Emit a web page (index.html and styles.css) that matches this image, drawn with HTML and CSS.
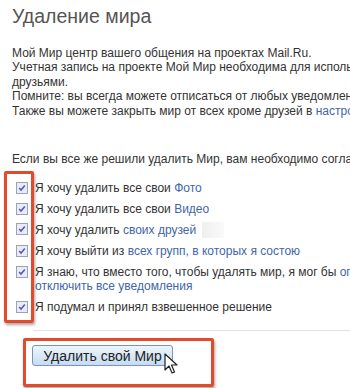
FILE: index.html
```html
<!DOCTYPE html>
<html>
<head>
	<meta charset="utf-8">
	<meta name="viewport" content="width=device-width, initial-scale=1">
	<title>Удаление мира</title>
	<link rel="stylesheet" href="styles.css">
</head>
<body>

<div class="page">
	<h1 class="title">Удаление мира</h1>

	<p class="intro">
		Мой Мир центр вашего общения на проектах Mail.Ru.<br>
		Учетная запись на проекте Мой Мир необходима для использования<br>
		друзьями.<br>
		Помните: вы всегда можете отписаться от любых уведомлений<br>
		Также вы можете закрыть мир от всех кроме друзей в <a href="#">настройках</a>
	</p>

	<p class="lead">Если вы все же решили удалить Мир, вам необходимо согласиться</p>

	<div class="checks">
		<label class="row"><svg class="box" width="12" height="12" viewBox="0 0 12 12"><rect x="0.5" y="0.5" width="11" height="11" fill="#e9ecf4" stroke="#97a3bb"/><path d="M3.2 6 L5 8 L8.8 3.4" fill="none" stroke="#5454c4" stroke-width="1.5"/></svg><span>Я хочу удалить все свои <a href="#">Фото</a></span></label>
		<label class="row"><svg class="box" width="12" height="12" viewBox="0 0 12 12"><rect x="0.5" y="0.5" width="11" height="11" fill="#e9ecf4" stroke="#97a3bb"/><path d="M3.2 6 L5 8 L8.8 3.4" fill="none" stroke="#5454c4" stroke-width="1.5"/></svg><span>Я хочу удалить все свои <a href="#">Видео</a></span></label>
		<label class="row"><svg class="box" width="12" height="12" viewBox="0 0 12 12"><rect x="0.5" y="0.5" width="11" height="11" fill="#e9ecf4" stroke="#97a3bb"/><path d="M3.2 6 L5 8 L8.8 3.4" fill="none" stroke="#5454c4" stroke-width="1.5"/></svg><span>Я хочу удалить <a href="#">своих друзей</a><span class="smudge"></span></span></label>
		<label class="row"><svg class="box" width="12" height="12" viewBox="0 0 12 12"><rect x="0.5" y="0.5" width="11" height="11" fill="#e9ecf4" stroke="#97a3bb"/><path d="M3.2 6 L5 8 L8.8 3.4" fill="none" stroke="#5454c4" stroke-width="1.5"/></svg><span>Я хочу выйти из <a href="#">всех групп, в которых я состою</a></span></label>
		<label class="row"><svg class="box" width="12" height="12" viewBox="0 0 12 12"><rect x="0.5" y="0.5" width="11" height="11" fill="#e9ecf4" stroke="#97a3bb"/><path d="M3.2 6 L5 8 L8.8 3.4" fill="none" stroke="#5454c4" stroke-width="1.5"/></svg><span>Я знаю, что вместо того, чтобы удалять мир, я мог бы <a href="#">ограничить</a><br><a href="#">отключить все уведомления</a></span></label>
		<label class="row"><svg class="box" width="12" height="12" viewBox="0 0 12 12"><rect x="0.5" y="0.5" width="11" height="11" fill="#e9ecf4" stroke="#97a3bb"/><path d="M3.2 6 L5 8 L8.8 3.4" fill="none" stroke="#5454c4" stroke-width="1.5"/></svg><span>Я подумал и принял взвешенное решение</span></label>
	</div>

	<hr class="line">

	<div class="actions">
		<button class="delete">Удалить свой Мир</button>
	</div>

	<!-- annotation frames and cursor drawn over the page -->
	<div class="mark mark-checks"></div>
	<div class="mark mark-button"></div>
	<svg class="cursor" width="14" height="22" viewBox="0 0 14 22">
		<path d="M1 1 L1 17 L5 13 L8 20 L10.5 19 L7.5 12 L13 12 Z" fill="#fff" stroke="#222" stroke-width="1.2" stroke-linejoin="round"/>
	</svg>
</div>

</body>
</html>
```

FILE: styles.css
```css
/* page */
body {
	margin: 0;
	padding: 0;
	background: #fff;
	font-family: "Liberation Sans", Arial, sans-serif;
	color: #333;
	overflow: hidden;
}
a {
	color: #4266a8;
	text-decoration: none;
}
.page {
	position: relative;
	width: 350px;
	height: 388px;
	padding: 0 0 0 12px;
	box-sizing: border-box;
	white-space: nowrap;
	overflow: hidden;
}
.title {
	margin: 0;
	padding-top: 4px;
	font-size: 19.5px;
	font-weight: normal;
	line-height: 24px;
	color: #555;
}
.intro {
	margin: 18px 0 0;
	font-size: 12px;
	line-height: 14.4px;
}
.lead {
	margin: 34px 0 0;
	font-size: 12px;
	line-height: 14.4px;
}
.checks {
	display: flex;
	flex-direction: column;
	gap: 6px;
	margin-top: 15px;
	font-size: 12px;
	line-height: 14.5px;
}
.row {
	display: flex;
	align-items: flex-start;
	gap: 7px;
	padding-left: 4px;
}
.box {
	flex: none;
	margin-top: 1px;
}
.smudge {
	display: inline-block;
	width: 22px;
	height: 16px;
	margin-left: 6px;
	vertical-align: -4px;
	background: linear-gradient(90deg, #efefef, #fafafa);
}
.line {
	margin: 16px 0 0 21px;
	border: 0;
	border-top: 1px solid #e2e2e2;
	height: 0;
}
.actions {
	padding: 14px 0 0 20px;
}
.delete {
	width: 141px;
	height: 21px;
	padding: 0;
	font-family: "Liberation Sans", Arial, sans-serif;
	font-size: 14px;
	color: #222;
	border: 1px solid #7d93b5;
	border-radius: 3px;
	background: linear-gradient(#eef5fc, #c5dcf3);
}
.mark {
	position: absolute;
	border: 3px solid #e14b2b;
	border-radius: 2px;
	box-shadow: 1px 2px 3px rgba(0, 0, 0, 0.35);
}
.mark-checks {
	left: 4px;
	top: 171px;
	width: 24px;
	height: 146px;
}
.mark-button {
	left: 23px;
	top: 338px;
	width: 185px;
	height: 43px;
}
.cursor {
	position: absolute;
	left: 164px;
	top: 353px;
}
```
